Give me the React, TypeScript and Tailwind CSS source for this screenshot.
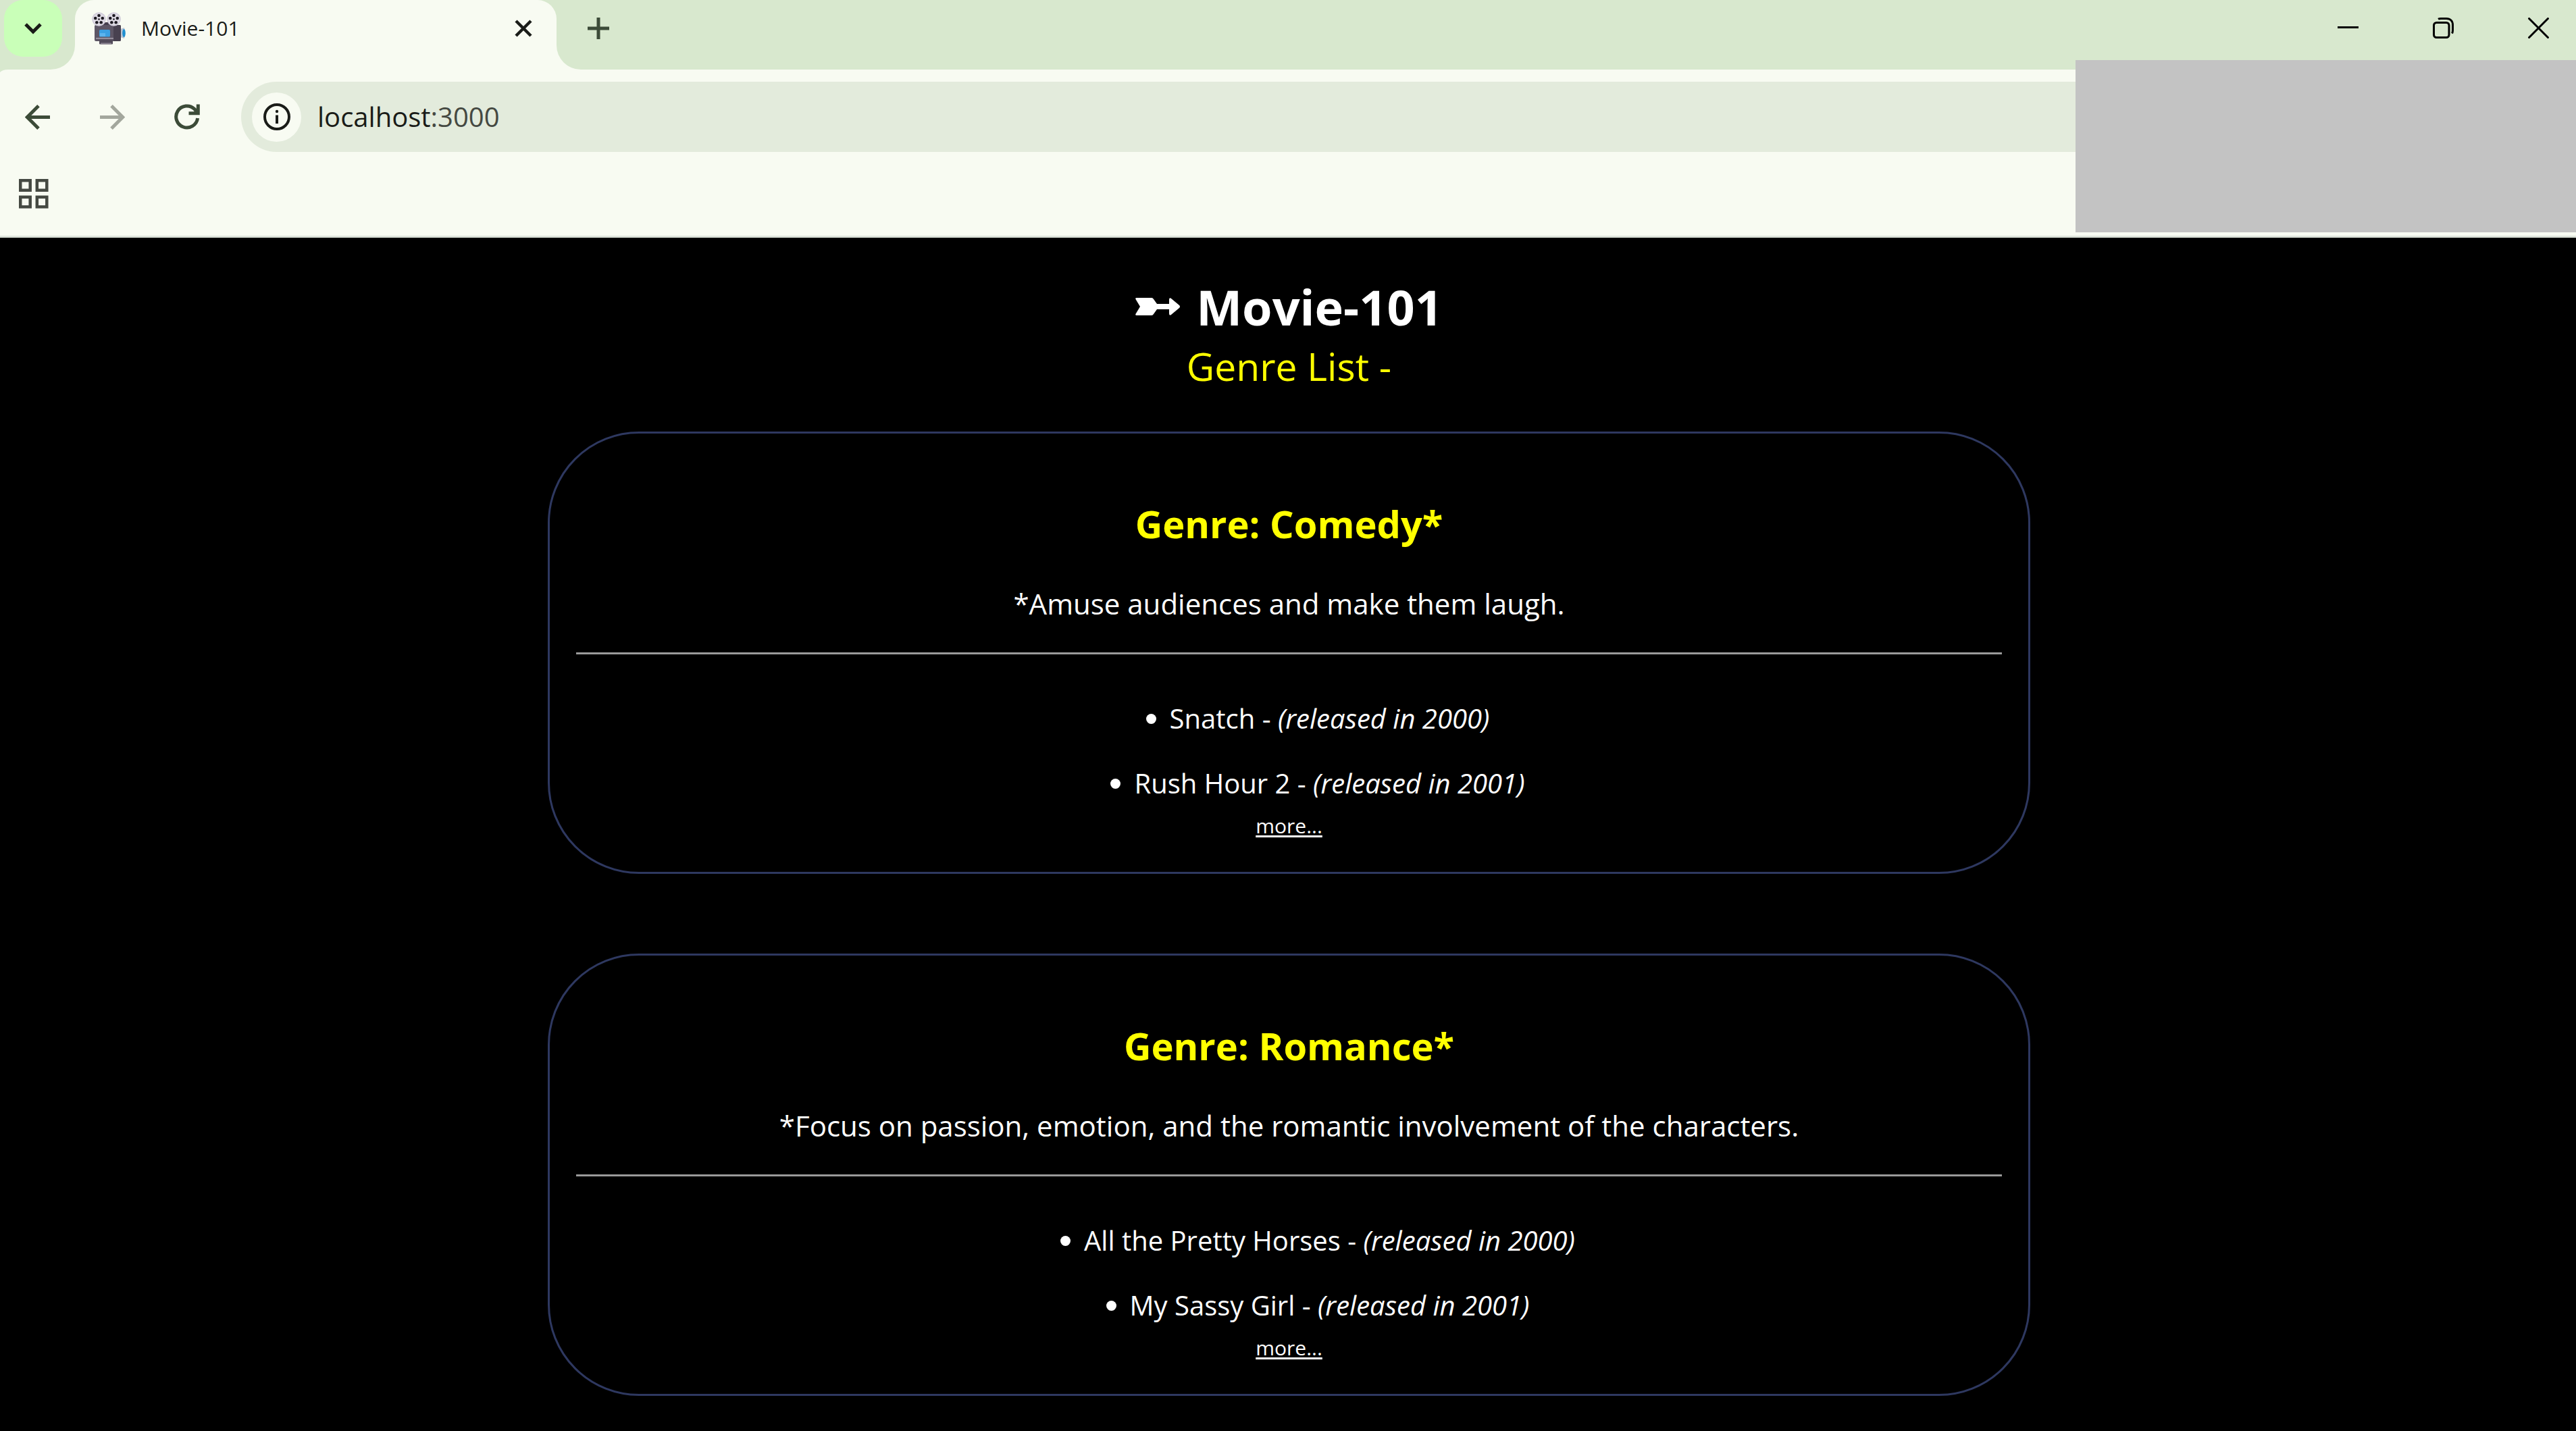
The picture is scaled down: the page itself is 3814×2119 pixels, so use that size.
import React from "react";

type Movie = { title: string; year: number };
type Genre = { name: string; description: string; movies: Movie[] };

const genres: Genre[] = [
  {
    name: "Comedy",
    description: "Amuse audiences and make them laugh.",
    movies: [
      { title: "Snatch", year: 2000 },
      { title: "Rush Hour 2", year: 2001 },
    ],
  },
  {
    name: "Romance",
    description: "Focus on passion, emotion, and the romantic involvement of the characters.",
    movies: [
      { title: "All the Pretty Horses", year: 2000 },
      { title: "My Sassy Girl", year: 2001 },
    ],
  },
];

function Reel({ x }: { x: number }) {
  return (
    <g transform={`translate(${x} 10.500)`}>
      <circle r="10.300" fill="#cfcad8" />
      <circle r="9" fill="#dedae4" />
      <g fill="#1d1a22">
        <circle r="1.300" />
        <circle cx="0" cy="-5.500" r="2.300" />
        <circle cx="5.300" cy="-1.500" r="2.300" />
        <circle cx="3.200" cy="4.700" r="2.300" />
        <circle cx="-3.200" cy="4.700" r="2.300" />
        <circle cx="-5.300" cy="-1.500" r="2.300" />
      </g>
    </g>
  );
}

function CameraIcon() {
  return (
    <svg viewBox="0 0 50 48" className="h-12 w-[50px] shrink-0" aria-hidden="true">
      <path d="M15 20 L20 15 H24 L34 20 Z" fill="#463f4f" />
      <path d="M42 25 L48 23 Q50 31 48 39 L42 37 Z" fill="#b9c4d4" />
      <ellipse cx="47.500" cy="31" rx="2.300" ry="6" fill="#1f8fd0" />
      <rect x="4" y="19" width="39" height="24" rx="2" fill="#5d5666" />
      <path d="M32 19 H41 Q43 19 43 21 V41 Q43 43 41 43 H32 Z" fill="#484150" />
      <rect x="6" y="38" width="26" height="1.500" fill="#a7a0ad" />
      <rect x="11" y="41" width="20" height="6.500" rx="1" fill="#514a59" />
      <rect x="13" y="45.500" width="16" height="2" fill="#8b8492" />
      <rect x="11" y="26" width="16" height="10.500" rx="1.500" fill="#3ba0e4" />
      <path d="M12 31 H20 V36 H12 Z" fill="#5db4ee" />
      <Reel x={10.5} />
      <Reel x={32.5} />
    </svg>
  );
}

function TabStrip() {
  return (
    <div className="flex h-[103px] items-start bg-[#d8e8ce]">
      <div className="relative h-full w-[111px] shrink-0">
        <button aria-label="Search tabs" className="ml-1.5 flex h-21 w-[86px] items-center justify-center rounded-[28px] bg-[#c9ffb8]">
          <svg viewBox="0 0 26 17" className="h-[17px] w-[26px]" fill="none" stroke="#1a1c18" strokeWidth="5">
            <path d="M2 2 L13 13 L24 2" />
          </svg>
        </button>
        <svg viewBox="0 0 36 36" className="absolute bottom-0 right-0 size-9" fill="#f8fbf2">
          <path d="M36 0 V36 H0 A36 36 0 0 0 36 0 Z" />
        </svg>
        <svg viewBox="0 0 12 4" className="absolute -bottom-1 left-0 h-1 w-3" fill="#d8e8ce">
          <path d="M0 0 H12 Q4 0 0 4 Z" />
        </svg>
      </div>
      <div className="flex h-full w-[713px] shrink-0 items-start rounded-t-[28px] bg-[#f8fbf2] pl-[25px] pr-9">
        <div className="flex h-21 w-full items-center">
          <CameraIcon />
          <span className="ml-[23px] flex-1 text-[30px] leading-none text-[#1a1c18]">Movie-101</span>
          <button aria-label="Close tab">
            <svg viewBox="0 0 26 26" className="size-[26px]" stroke="#1a1c18" strokeWidth="4.500">
              <path d="M2 2 L24 24 M24 2 L2 24" />
            </svg>
          </button>
        </div>
      </div>
      <div className="flex h-full flex-1 items-end">
        <svg viewBox="0 0 36 36" className="size-9" fill="#f8fbf2">
          <path d="M0 0 V36 H36 A36 36 0 0 1 0 0 Z" />
        </svg>
        <div className="flex h-full items-start">
          <button aria-label="New tab" className="ml-2.5 flex h-[83px] w-8 items-center">
            <svg viewBox="0 0 32 32" className="size-8" stroke="#3c4b38" strokeWidth="5">
              <path d="M16 0 V32 M0 16 H32" />
            </svg>
          </button>
        </div>
      </div>
      <div className="flex h-[83px] items-center gap-[110px] pr-10">
        <button aria-label="Minimize">
          <svg viewBox="0 0 31 31" className="size-[31px]" stroke="#000" strokeWidth="3">
            <path d="M0 14.500 H31" />
          </svg>
        </button>
        <button aria-label="Restore">
          <svg viewBox="0 0 31 31" className="size-[31px]" fill="none" stroke="#000" strokeWidth="3">
            <rect x="1.500" y="7.500" width="22.500" height="22" rx="4" />
            <path d="M8 2.300 C9 1.700 10 1.500 12 1.500 H20 C26 1.500 29.500 5 29.500 11 V19 C29.500 21 29.300 22 28.500 23.500" />
          </svg>
        </button>
        <button aria-label="Close">
          <svg viewBox="0 0 31 31" className="size-[31px]" stroke="#000" strokeWidth="3">
            <path d="M0.500 0.500 L30.500 30.500 M30.500 0.500 L0.500 30.500" />
          </svg>
        </button>
      </div>
    </div>
  );
}

function Toolbar() {
  return (
    <div className="flex items-center pt-[18px]">
      <button aria-label="Back" className="ml-[37px]">
        <svg viewBox="0 0 37 37" className="size-[37px]" fill="none" stroke="#3c4b38" strokeWidth="5">
          <path d="M37 18.500 H3 M20 1.800 L3.300 18.500 L20 35.200" />
        </svg>
      </button>
      <button aria-label="Forward" className="ml-[74px]" disabled>
        <svg viewBox="0 0 37 37" className="size-[37px]" fill="none" stroke="#a3a79d" strokeWidth="5">
          <path d="M0 18.500 H34 M17 1.800 L33.700 18.500 L17 35.200" />
        </svg>
      </button>
      <button aria-label="Reload" className="ml-[73px]">
        <svg viewBox="0 0 38 38" className="size-[38px]" fill="none" stroke="#3c4b38" strokeWidth="5">
          <path d="M34.600 21 A16 16 0 1 1 30 7.600 L34 12" />
          <path d="M35.300 0.500 V13.800 H21.500" />
          <path d="M35 5 V14 H27 Z" fill="#3c4b38" stroke="none" />
        </svg>
      </button>
      <div className="ml-[61px] flex h-[104px] flex-1 items-center rounded-l-full bg-[#e3ebdc] pl-4">
        <button aria-label="View site information" className="flex size-[73px] items-center justify-center rounded-full bg-[#f8fbf2]">
          <svg viewBox="0 0 40 40" className="size-10" fill="none" stroke="#1a1c18" strokeWidth="4">
            <circle cx="20" cy="20" r="18" />
            <path d="M20 17.500 V30" />
            <circle cx="20" cy="12" r="2.200" fill="#1a1c18" stroke="none" />
          </svg>
        </button>
        <a href="#" className="ml-6 text-[40px] leading-none text-[#1a1c18]">
          localhost<span className="text-[#454942]">:3000</span>
        </a>
      </div>
    </div>
  );
}

function BrowserChrome() {
  return (
    <header className="relative border-b-3 border-[#dde3da] bg-[#f8fbf2]">
      <TabStrip />
      <Toolbar />
      <div className="flex h-[124px] items-start pl-7 pt-10">
        <button aria-label="Apps">
          <svg viewBox="0 0 44 44" className="size-11" fill="none" stroke="#454942" strokeWidth="4.500">
            <rect x="2.200" y="2.200" width="14.500" height="14.500" />
            <rect x="26.800" y="2.200" width="14.500" height="14.500" />
            <rect x="2.200" y="26.800" width="14.500" height="14.500" />
            <rect x="26.800" y="26.800" width="14.500" height="14.500" />
          </svg>
        </button>
      </div>
      <div className="absolute right-0 top-[89px] h-[255px] w-[741px] bg-[#c3c3c3]" />
    </header>
  );
}

function GenreCard({ genre }: { genre: Genre }) {
  return (
    <section className="w-full rounded-[135px] border-3 border-[#2e3860] px-[39px] pb-[53px] pt-[93px] text-center">
      <h2 className="text-[56px] font-bold leading-[80px] text-[#ffff00]">Genre: {genre.name}*</h2>
      <p className="mt-[49px] text-[42px] leading-[60px]">*{genre.description}</p>
      <hr className="mt-[42px] border-t-3 border-[#9a9a9a]" />
      <ul className="mt-[47px] pl-[85px] text-[40px] leading-[96px]">
        {genre.movies.map((m) => (
          <li key={m.title} className="flex items-center justify-center gap-5">
            <span className="size-[15px] rounded-full bg-white" />
            <span>
              {m.title} - <em>(released in {m.year})</em>
            </span>
          </li>
        ))}
      </ul>
      <div className="flex justify-center">
        <a href="#" className="text-[30px] leading-[30px] underline decoration-[3px] underline-offset-[3px]">
          more...
        </a>
      </div>
    </section>
  );
}

export default function App() {
  return (
    <div className="flex min-h-screen flex-col bg-black font-['Open_Sans',sans-serif] text-white">
      <BrowserChrome />
      <main className="flex flex-col items-center pl-[3px] pt-[54px]">
        <h1 className="flex items-center gap-6 text-[72px] font-bold leading-[96px]">
          <svg viewBox="0 0 66 26" className="h-[26px] w-[66px]" fill="#fff" role="img" aria-label="Arrow">
            <path d="M2 0 H24 Q26 0 27 2 L32 9 H50 V3 Q50 -1 53 1 L65 11 Q67 13 65 15 L53 25 Q50 27 50 23 V17 H32 L27 24 Q26 26 24 26 H2 Q-1 26 1 23 L7 13 L1 3 Q-1 0 2 0 Z" />
          </svg>
          Movie-101
        </h1>
        <p className="text-[57px] leading-[80px] text-[#ffff00]">Genre List -</p>
        <div className="mt-[57px] flex w-[57.6%] flex-col gap-[118px]">
          {genres.map((g) => (
            <GenreCard key={g.name} genre={g} />
          ))}
        </div>
      </main>
    </div>
  );
}
